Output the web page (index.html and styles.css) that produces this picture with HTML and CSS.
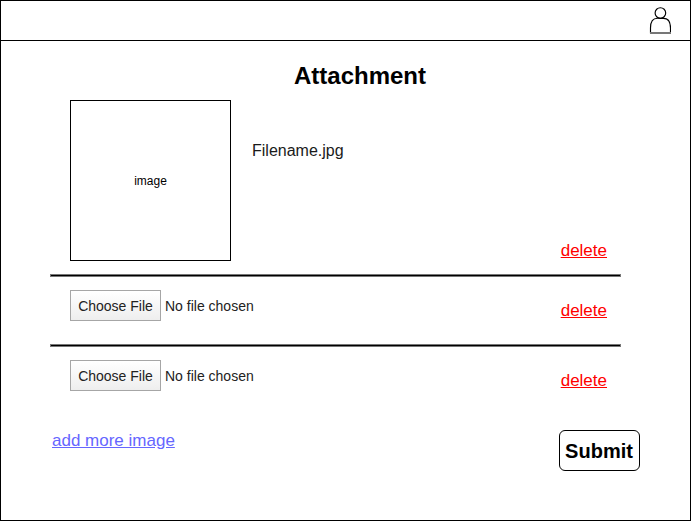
FILE: index.html
```html
<!DOCTYPE html>
<html lang="en">
<head>
<meta charset="utf-8">
<title>Attachment</title>
<link rel="stylesheet" href="styles.css">
</head>
<body>
<div class="window">
  <header class="topbar">
    <svg class="user" width="22" height="28" viewBox="0 0 22 28" fill="none" stroke="#000" stroke-width="1.15">
      <circle cx="11.4" cy="6" r="5.3"/>
      <path d="M1.5 26.2V21C1.5 14.5 4 11.3 8.5 11.3H14.5C19 11.3 21.5 14.5 21.5 21V26.2"/>
      <path d="M1 26H22" stroke="#777" stroke-width="2"/>
    </svg>
  </header>
  <main class="content">
    <h1 class="title">Attachment</h1>
    <section class="row row-image">
      <div class="thumb">image</div>
      <span class="filename">Filename.jpg</span>
      <a class="delete">delete</a>
    </section>
    <hr class="rule">
    <section class="row row-file">
      <span class="choose">Choose File</span>
      <span class="status">No file chosen</span>
      <a class="delete">delete</a>
    </section>
    <hr class="rule">
    <section class="row row-file">
      <span class="choose">Choose File</span>
      <span class="status">No file chosen</span>
      <a class="delete">delete</a>
    </section>
    <footer class="actions">
      <a class="add">add more image</a>
      <button class="submit">Submit</button>
    </footer>
  </main>
</div>
</body>
</html>
```

FILE: styles.css
```css
* { box-sizing: border-box; }
body { margin: 0; font-family: "Liberation Sans", Arial, sans-serif; color: #000; background: #fff; }
.window { width: 691px; height: 521px; border: 1px solid #000; overflow: hidden; }
.topbar { height: 40px; border-bottom: 1px solid #000; display: flex; justify-content: flex-end; padding: 6px 19px 0 0; }
.user { display: block; }
.content { padding: 0 50px 0 49px; }
.title { margin: 20px 0 0 49px; width: 522px; height: 39px; font-size: 24px; line-height: 30px; text-align: center; }
.row { display: flex; width: 571px; padding: 0 14px 0 20px; }
.rule { width: 571px; height: 3px; margin: 0; border: 1px solid #777; background: #000; }
.delete { margin-left: auto; color: #f00; font-size: 17px; line-height: 20px; text-decoration: underline; }
.row-image { height: 174px; }
.thumb { width: 161px; height: 161px; border: 1px solid #000; font-size: 12px; line-height: 160px; text-align: center; }
.filename { margin: 41px 0 0 21px; font-size: 16px; line-height: 20px; color: #1a1a1a; }
.row-image .delete { margin-top: 141px; }
.row-file { height: 67px; padding-top: 13px; }
.row-file .delete { margin-top: 11px; }
.choose { width: 91px; height: 31px; border: 1px solid #a6a6a6; background: linear-gradient(#fff, #eee); color: #222; font-size: 14px; line-height: 30px; text-align: center; }
.status { margin-left: 4px; font-size: 14px; line-height: 32px; color: #222; }
.actions { display: flex; justify-content: space-between; padding: 16px 0 0 2px; }
.add { margin-top: 1px; color: #6666ff; font-size: 17px; line-height: 20px; text-decoration: underline; }
.submit { width: 81px; height: 41px; padding: 0 1px 0 0; border: 1px solid #000; border-radius: 6px; background: #fff; color: #000; font: bold 20px/41px "Liberation Sans", Arial, sans-serif; }
```
